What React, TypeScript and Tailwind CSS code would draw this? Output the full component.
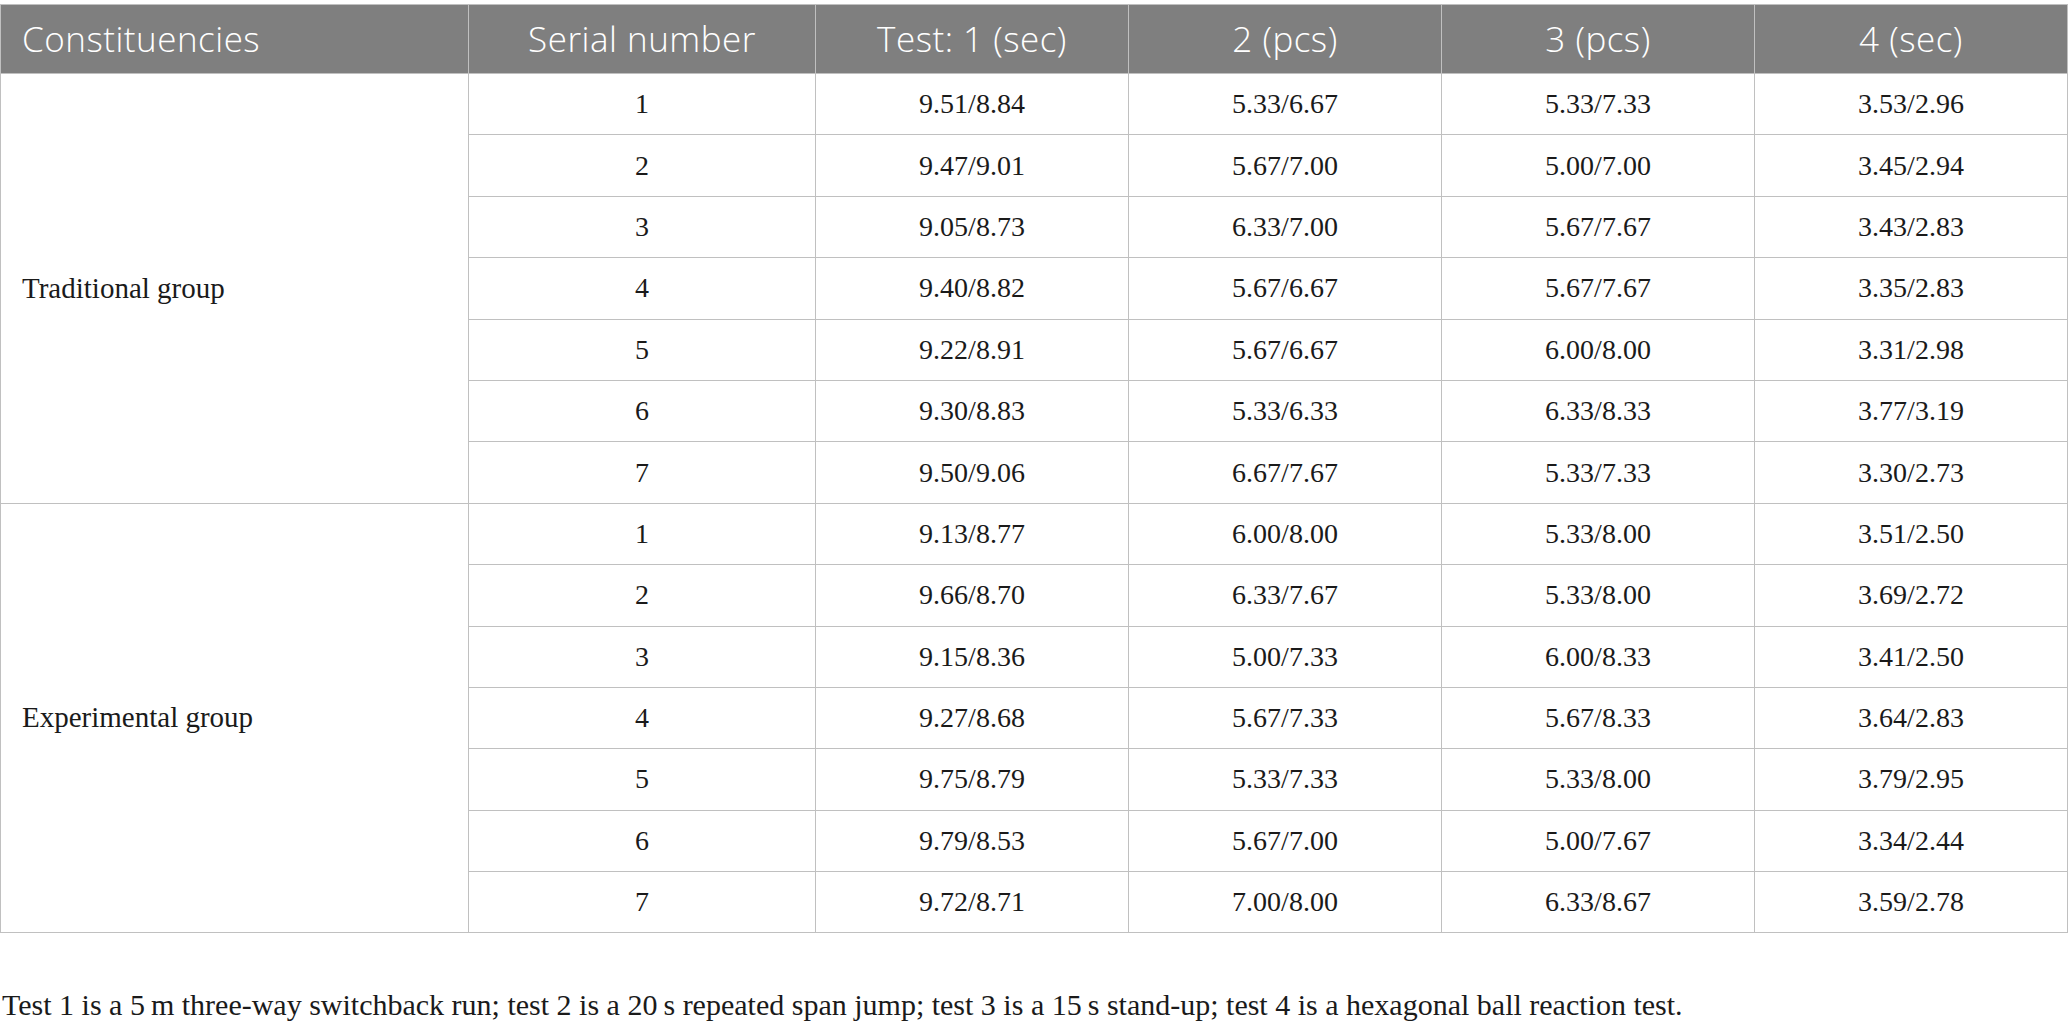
import React from 'react';

type Row = { serial: number; t1: string; t2: string; t3: string; t4: string };

const traditional: Row[] = [
  { serial: 1, t1: '9.51/8.84', t2: '5.33/6.67', t3: '5.33/7.33', t4: '3.53/2.96' },
  { serial: 2, t1: '9.47/9.01', t2: '5.67/7.00', t3: '5.00/7.00', t4: '3.45/2.94' },
  { serial: 3, t1: '9.05/8.73', t2: '6.33/7.00', t3: '5.67/7.67', t4: '3.43/2.83' },
  { serial: 4, t1: '9.40/8.82', t2: '5.67/6.67', t3: '5.67/7.67', t4: '3.35/2.83' },
  { serial: 5, t1: '9.22/8.91', t2: '5.67/6.67', t3: '6.00/8.00', t4: '3.31/2.98' },
  { serial: 6, t1: '9.30/8.83', t2: '5.33/6.33', t3: '6.33/8.33', t4: '3.77/3.19' },
  { serial: 7, t1: '9.50/9.06', t2: '6.67/7.67', t3: '5.33/7.33', t4: '3.30/2.73' },
];

const experimental: Row[] = [
  { serial: 1, t1: '9.13/8.77', t2: '6.00/8.00', t3: '5.33/8.00', t4: '3.51/2.50' },
  { serial: 2, t1: '9.66/8.70', t2: '6.33/7.67', t3: '5.33/8.00', t4: '3.69/2.72' },
  { serial: 3, t1: '9.15/8.36', t2: '5.00/7.33', t3: '6.00/8.33', t4: '3.41/2.50' },
  { serial: 4, t1: '9.27/8.68', t2: '5.67/7.33', t3: '5.67/8.33', t4: '3.64/2.83' },
  { serial: 5, t1: '9.75/8.79', t2: '5.33/7.33', t3: '5.33/8.00', t4: '3.79/2.95' },
  { serial: 6, t1: '9.79/8.53', t2: '5.67/7.00', t3: '5.00/7.67', t4: '3.34/2.44' },
  { serial: 7, t1: '9.72/8.71', t2: '7.00/8.00', t3: '6.33/8.67', t4: '3.59/2.78' },
];

const groups = [
  { name: 'Traditional group', rows: traditional },
  { name: 'Experimental group', rows: experimental },
];

const cell = 'border border-[#c0c0c0] text-center align-middle h-[61.4px] p-0';
const head = 'border border-[#c0c0c0] font-light';

const App: React.FC = () => {
  return (
    <div className="w-[2068px] bg-white pt-[4px] font-['Liberation_Serif',serif] text-[#1a1a1a]">
      <table className="w-full table-fixed border-collapse">
        <colgroup>
          <col className="w-[468px]" />
          <col className="w-[347px]" />
          <col className="w-[313px]" />
          <col className="w-[313px]" />
          <col className="w-[313px]" />
          <col />
        </colgroup>
        <thead>
          <tr className="bg-[#7f7f7f] text-white font-['Open_Sans',sans-serif] text-[35px] tracking-[0.5px] h-[69px]">
            <th className={`${head} text-left pl-[21px]`}>Constituencies</th>
            <th className={head}>Serial number</th>
            <th className={head}>Test: 1 (sec)</th>
            <th className={head}>2 (pcs)</th>
            <th className={head}>3 (pcs)</th>
            <th className={head}>4 (sec)</th>
          </tr>
        </thead>
        <tbody className="text-[28px]">
          {groups.map((group) =>
            group.rows.map((row, index) => (
              <tr key={`${group.name}-${row.serial}`}>
                {index === 0 && (
                  <td
                    rowSpan={group.rows.length}
                    className="border border-[#c0c0c0] text-left pl-[21px] align-middle text-[29px]"
                  >
                    {group.name}
                  </td>
                )}
                <td className={cell}>{row.serial}</td>
                <td className={cell}>{row.t1}</td>
                <td className={cell}>{row.t2}</td>
                <td className={cell}>{row.t3}</td>
                <td className={cell}>{row.t4}</td>
              </tr>
            ))
          )}
        </tbody>
      </table>
      <p className="mt-[54px] pl-[2px] text-[30px] leading-[36px]">
        Test 1 is a 5{'\u2009'}m three-way switchback run; test 2 is a 20{'\u2009'}s repeated span jump; test 3 is a 15{'\u2009'}s stand-up; test 4 is a hexagonal ball reaction test.
      </p>
    </div>
  );
};

export default App;
